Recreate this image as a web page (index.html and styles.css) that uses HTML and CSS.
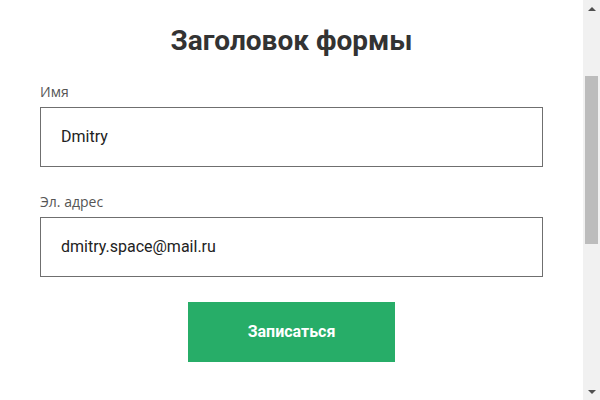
FILE: index.html
```html
<!DOCTYPE html>
<html lang="ru">
<head>
    <meta charset="UTF-8">
    <meta name="viewport" content="width=device-width, initial-scale=1.0">
    <title>Форма</title>
    <link rel="stylesheet" href="styles.css">
</head>
<body>

<main class="page">
<form class="signup" action="#">
    <h1 class="signup-title">Заголовок формы</h1>

    <div class="field">
        <label class="field-label" for="name">Имя</label>
        <input class="field-input" id="name" type="text" value="Dmitry">
    </div>

    <div class="field">
        <label class="field-label" for="email">Эл. адрес</label>
        <input class="field-input" id="email" type="email" value="dmitry.space@mail.ru">
    </div>

    <button class="signup-button" type="submit">Записаться</button>
</form>
</main>

<!-- window scrollbar, the page is scrolled a bit -->
<aside class="scrollbar" aria-hidden="true">
    <span class="scrollbar-btn"><i class="arrow arrow-up"></i></span>
    <span class="scrollbar-track"><span class="scrollbar-thumb"></span></span>
    <span class="scrollbar-btn"><i class="arrow arrow-down"></i></span>
</aside>

</body>
</html>
```

FILE: styles.css
```css
:root{
    --text-color: #222;
    --label-color: #555;
    --border-color: #6f6f6f;
    --accent: #27ad68;
}

*{
padding: 0;
margin: 0;
box-sizing: border-box;
}

body{
display: flex;
height: 100vh;
overflow: hidden;
font-family: 'Open Sans', 'Noto Sans', sans-serif;
color: var(--text-color);
background: #fff;
}

.page{
flex: 1;
padding: 24px 40px 0;
}

.signup{
display: flex;
flex-direction: column;
}

.signup-title{
font-family: Roboto, 'Liberation Sans', sans-serif;
font-size: 28px;
font-weight: 700;
line-height: 1.2;
color: #333;
text-align: center;
margin-bottom: 24px;
}

.field{
display: flex;
flex-direction: column;
gap: 5px;
margin-bottom: 25px;
}

.field-label{
font-size: 14px;
line-height: 20px;
color: var(--label-color);
}

.field-input{
height: 60px;
padding: 0 20px;
border: 1px solid var(--border-color);
border-radius: 0;
font-family: Roboto, 'Liberation Sans', sans-serif;
font-size: 16px;
color: var(--text-color);
outline: none;
}

.signup-button{
    all: unset;
    align-self: center;
    width: 207px;
    height: 60px;
    background: var(--accent);
    color: #fff;
    font-family: Roboto, 'Liberation Sans', sans-serif;
    font-size: 16px;
    font-weight: 700;
    text-align: center;
    line-height: 60px;
    cursor: pointer;
}

/* scrollbar */
.scrollbar{
display: flex;
flex-direction: column;
width: 17px;
background: #f1f1f1;
}

.scrollbar-btn{
display: flex;
align-items: center;
justify-content: center;
height: 17px;
}

.arrow{
width: 0;
height: 0;
border-left: 4px solid transparent;
border-right: 4px solid transparent;
}

.arrow-up{
border-bottom: 4px solid #505050;
}

.arrow-down{
border-top: 4px solid #505050;
}

.scrollbar-track{
flex: 1;
padding: 0 2px;
}

.scrollbar-thumb{
display: block;
height: 168px;
margin-top: 59px;
background: #bcbcbc;
}
```
